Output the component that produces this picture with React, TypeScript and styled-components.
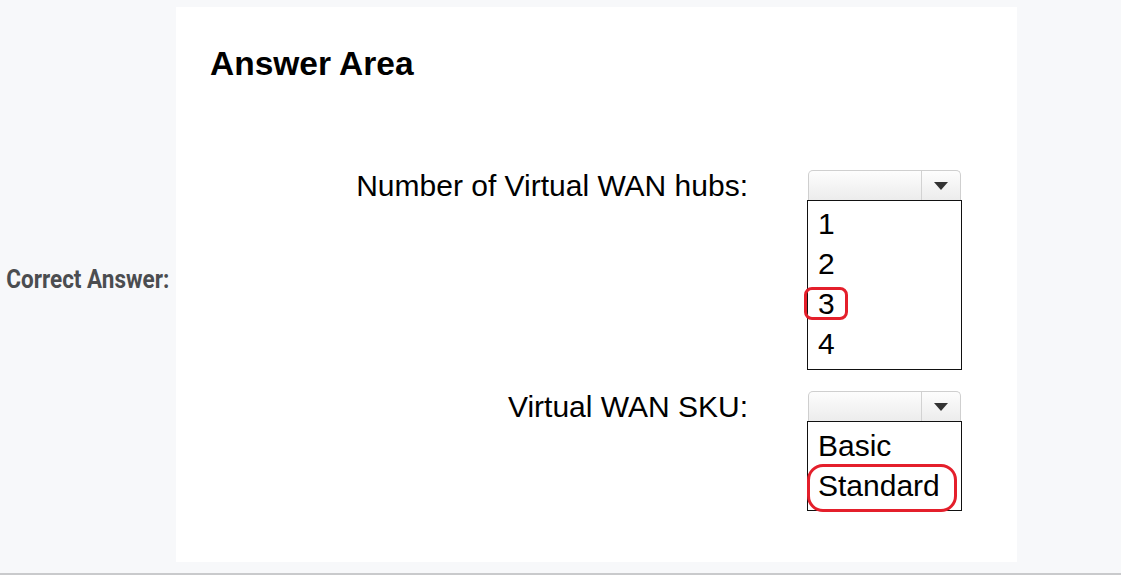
import React from "react";
import styled, { createGlobalStyle } from "styled-components";

const Global = createGlobalStyle`
  html, body { margin: 0; padding: 0; background: #ffffff; }
  body { font-family: "Liberation Sans", Arial, sans-serif; }
`;

const Section = styled.div`
  display: flex;
  align-items: stretch;
  background: #f7f8fa;
  padding: 7px 0 11px 0;
  border-bottom: 2px solid #c9cacc;
  height: 555px;
  box-sizing: content-box;
`;

const SideLabel = styled.div`
  width: 176px;
  flex: none;
  display: flex;
  align-items: center;
  padding-left: 7px;
  padding-bottom: 10px;
  box-sizing: border-box;
  font-family: Roboto, "Liberation Sans", sans-serif;
  font-weight: 700;
  font-size: 25px;
  color: #4b4d50;
  transform: scaleX(0.9);
  transform-origin: left center;
  white-space: nowrap;
`;

const Panel = styled.div`
  width: 841px;
  background: #ffffff;
  display: flex;
  flex-direction: column;
`;

const Heading = styled.h2`
  margin: 38px 0 0 34px;
  font-family: "Liberation Sans", Arial, sans-serif;
  font-weight: 700;
  font-size: 33.5px;
  line-height: 38px;
  color: #000;
`;

const Form = styled.div`
  margin-top: 87px;
  display: grid;
  grid-template-columns: 572px 155px;
  column-gap: 59px;
  row-gap: 21px;
  align-items: start;
`;

const Prompt = styled.div`
  text-align: right;
  font-size: 30px;
  line-height: 30px;
  height: 30px;
  color: #000;
  white-space: nowrap;
  padding-top: 1px;
`;

const Select = styled.div`
  display: flex;
  flex-direction: column;
`;

const DropHeader = styled.div`
  margin-left: 1px;
  width: 153px;
  height: 30px;
  box-sizing: border-box;
  border: 1px solid #cfcfcf;
  border-bottom: none;
  border-radius: 5px 5px 0 0;
  background: linear-gradient(#fdfdfd, #ececec);
  display: flex;
`;

const DropField = styled.div`
  flex: 1;
`;

const DropButton = styled.div`
  width: 38px;
  border-left: 1px solid #d2d2d2;
  display: flex;
  align-items: center;
  justify-content: center;
`;

const Arrow = styled.div`
  width: 0;
  height: 0;
  border-left: 7px solid transparent;
  border-right: 7px solid transparent;
  border-top: 8px solid #333;
`;

const List = styled.div<{ $top: number; $bottom: number }>`
  border: 1px solid #111;
  padding: ${(p) => p.$top}px 0 ${(p) => p.$bottom}px 0;
  width: 155px;
  box-sizing: border-box;
`;

const Item = styled.div<{ $mark?: "small" | "wide" }>`
  position: relative;
  height: 40px;
  line-height: 40px;
  padding-left: 10px;
  font-size: 30px;
  color: #000;
  ${(p) =>
    p.$mark === "small"
      ? `&::after { content: ""; position: absolute; left: -4px; top: 3px; width: 44px; height: 33px; box-sizing: border-box; border: 3px solid #e41f2b; border-radius: 8px; }`
      : p.$mark === "wide"
      ? `&::after { content: ""; position: absolute; left: -1px; top: -2px; width: 150px; height: 48px; box-sizing: border-box; border: 3px solid #e41f2b; border-radius: 16px; }`
      : ""}
`;

const DropDown: React.FC<{ options: string[]; mark: string; wide?: boolean; top: number; bottom: number }> = ({
  options,
  mark,
  wide,
  top,
  bottom,
}) => (
  <Select>
    <DropHeader>
      <DropField />
      <DropButton>
        <Arrow />
      </DropButton>
    </DropHeader>
    <List $top={top} $bottom={bottom}>
      {options.map((o) => (
        <Item key={o} $mark={o === mark ? (wide ? "wide" : "small") : undefined}>
          {o}
        </Item>
      ))}
    </List>
  </Select>
);

export default function App() {
  return (
    <>
      <Global />
      <Section>
        <SideLabel>Correct Answer:</SideLabel>
        <Panel>
          <Heading>Answer Area</Heading>
          <Form>
            <Prompt>Number of Virtual WAN hubs:</Prompt>
            <DropDown options={["1", "2", "3", "4"]} mark="3" top={3} bottom={5} />
            <Prompt>Virtual WAN SKU:</Prompt>
            <DropDown options={["Basic", "Standard"]} mark="Standard" wide top={4} bottom={4} />
          </Form>
        </Panel>
      </Section>
    </>
  );
}
